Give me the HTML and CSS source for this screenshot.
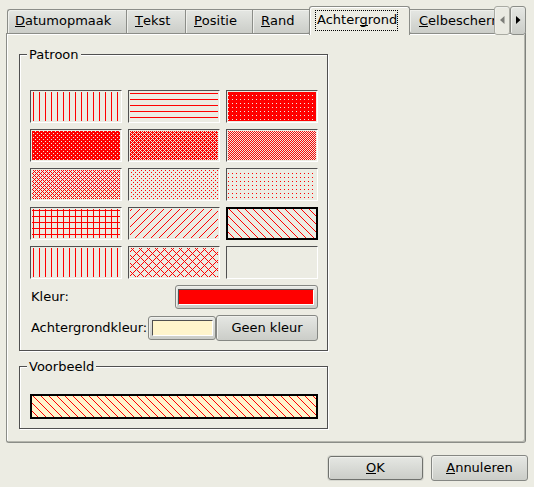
FILE: index.html
```
<!DOCTYPE html>
<html lang="nl">
<head>
<meta charset="utf-8">
<title>Achtergrond</title>
<link rel="stylesheet" href="styles.css">
</head>
<body>
<svg class="defs" width="0" height="0" aria-hidden="true">
  <defs>
    <pattern id="ver" width="6" height="6" patternUnits="userSpaceOnUse"><path d="M3 0h1v6h-1z"/></pattern>
    <pattern id="hor" width="6" height="6" patternUnits="userSpaceOnUse"><path d="M0 3h6v1h-6z"/></pattern>
    <pattern id="cross" width="6" height="6" patternUnits="userSpaceOnUse"><path d="M0 3h6v1h-6zM3 0h1v6h-1z"/></pattern>
    <pattern id="d1" width="4" height="4" patternUnits="userSpaceOnUse"><path fill-rule="evenodd" d="M0 0h4v4h-4zM2 1h1v1h-1z"/></pattern>
    <pattern id="d2" width="4" height="4" patternUnits="userSpaceOnUse"><path fill-rule="evenodd" d="M0 0h4v4h-4zM3 0h1v1h-1zM1 2h1v1h-1z"/></pattern>
    <pattern id="d3" width="4" height="4" patternUnits="userSpaceOnUse"><path fill-rule="evenodd" d="M0 0h4v4h-4zM1 0h1v1h-1zM3 0h1v1h-1zM0 1h1v1h-1zM1 2h1v1h-1zM3 2h1v1h-1zM2 3h1v1h-1z"/></pattern>
    <pattern id="d4" width="2" height="2" patternUnits="userSpaceOnUse"><path d="M0 0h1v1h-1zM1 1h1v1h-1z"/></pattern>
    <pattern id="d5" width="4" height="4" patternUnits="userSpaceOnUse"><path d="M1 0h1v1h-1zM3 0h1v1h-1zM2 1h1v1h-1zM1 2h1v1h-1zM3 2h1v1h-1zM0 3h1v1h-1z"/></pattern>
    <pattern id="d6" width="4" height="4" patternUnits="userSpaceOnUse"><path d="M3 0h1v1h-1zM1 2h1v1h-1z"/></pattern>
    <pattern id="d7" width="4" height="4" patternUnits="userSpaceOnUse"><path d="M2 1h1v1h-1z"/></pattern>
    <pattern id="bdiag" width="8" height="8" patternUnits="userSpaceOnUse"><path d="M5 0h1v1h-1zM4 1h1v1h-1zM3 2h1v1h-1zM2 3h1v1h-1zM1 4h1v1h-1zM0 5h1v1h-1zM7 6h1v1h-1zM6 7h1v1h-1z"/></pattern>
    <pattern id="fdiag" width="8" height="8" patternUnits="userSpaceOnUse"><path d="M1 0h1v1h-1zM2 1h1v1h-1zM3 2h1v1h-1zM4 3h1v1h-1zM5 4h1v1h-1zM6 5h1v1h-1zM7 6h1v1h-1zM0 7h1v1h-1z"/></pattern>
    <pattern id="dcross" width="8" height="8" patternUnits="userSpaceOnUse"><path d="M1 0h1v1h-1zM7 0h1v1h-1zM2 1h1v1h-1zM6 1h1v1h-1zM3 2h1v1h-1zM5 2h1v1h-1zM4 3h1v1h-1zM3 4h1v1h-1zM5 4h1v1h-1zM2 5h1v1h-1zM6 5h1v1h-1zM1 6h1v1h-1zM7 6h1v1h-1zM0 7h1v1h-1z"/></pattern>
  </defs>
</svg>
<div class="dialog">
  <div class="tabbar">
    <div class="tab t1"><u>D</u>atumopmaak</div>
    <div class="tab t2"><u>T</u>ekst</div>
    <div class="tab t3"><u>P</u>ositie</div>
    <div class="tab t4"><u>R</u>and</div>
    <div class="tab active"><span class="focus">Achter<u>g</u>rond</span></div>
    <div class="tab t6"><u>C</u>elbescherming</div>
    <div class="scroller off"><svg width="5" height="8" viewBox="0 0 5 8"><path d="M4.5 0v8L0 4z"/></svg></div>
    <div class="scroller"><svg width="5" height="8" viewBox="0 0 5 8"><path d="M0 0v8L4.5 4z"/></svg></div>
  </div>
  <div class="pane">
    <section class="group patterns">
      <div class="title">Patroon</div>
      <div class="grid">
        <svg class="swatch" viewBox="2 2 88 29"><rect width="92" height="33" fill="url(#ver)"/></svg>
        <svg class="swatch" viewBox="2 2 88 29"><rect width="92" height="33" fill="url(#hor)"/></svg>
        <svg class="swatch" viewBox="2 2 88 29"><rect width="92" height="33" fill="url(#d1)"/></svg>
        <svg class="swatch" viewBox="2 2 88 29"><rect width="92" height="33" fill="url(#d2)"/></svg>
        <svg class="swatch" viewBox="2 2 88 29"><rect width="92" height="33" fill="url(#d3)"/></svg>
        <svg class="swatch" viewBox="2 2 88 29"><rect width="92" height="33" fill="url(#d4)"/></svg>
        <svg class="swatch" viewBox="2 2 88 29"><rect width="92" height="33" fill="url(#d5)"/></svg>
        <svg class="swatch" viewBox="2 2 88 29"><rect width="92" height="33" fill="url(#d6)"/></svg>
        <svg class="swatch" viewBox="2 2 88 29"><rect width="92" height="33" fill="url(#d7)"/></svg>
        <svg class="swatch" viewBox="2 2 88 29"><rect width="92" height="33" fill="url(#cross)"/></svg>
        <svg class="swatch" viewBox="2 2 88 29"><rect width="92" height="33" fill="url(#bdiag)"/></svg>
        <svg class="swatch selected" viewBox="2 2 88 29"><rect width="92" height="33" fill="url(#fdiag)"/></svg>
        <svg class="swatch" viewBox="2 2 88 29"><rect width="92" height="33" fill="url(#ver)"/></svg>
        <svg class="swatch" viewBox="2 2 88 29"><rect width="92" height="33" fill="url(#dcross)"/></svg>
        <svg class="swatch" viewBox="2 2 88 29"></svg>
      </div>
      <div class="row color-row">
        <span class="label">Kleur:</span>
        <div class="button color"><div class="chip red"></div></div>
      </div>
      <div class="row back-row">
        <span class="label">Achtergrondkleur:</span>
        <div class="button color back"><div class="chip cream"></div></div>
        <div class="button none">Geen kleur</div>
      </div>
    </section>
    <section class="group sample">
      <div class="title">Voorbeeld</div>
      <svg class="preview" viewBox="2 2 284 21"><rect width="288" height="25" fill="url(#fdiag)"/></svg>
    </section>
  </div>
  <div class="actions">
    <div class="button ok"><span><u>O</u>K</span></div>
    <div class="button cancel"><span><u>A</u>nnuleren</span></div>
  </div>
</div>
</body>
</html>
```
FILE: styles.css
```
* { box-sizing: border-box; }
body {
  margin: 0;
  background: #ecece3;
  color: #000;
  font: 13px/15px "DejaVu Sans", sans-serif;
  overflow: hidden;
}
.defs { position: absolute; }
.defs path { fill: #f00; shape-rendering: crispEdges; }
u { display: inline-block; height: 14px; text-decoration: none; box-shadow: 0 -1px 0 #000 inset; }
.dialog { width: 534px; height: 487px; padding: 6px 8px 0 6px; }

.tabbar { display: flex; align-items: flex-start; height: 28px; padding-left: 1px; position: relative; z-index: 1; }
.tab {
  height: 25px;
  margin-top: 3px;
  padding: 3px 0 0 7px;
  border: 1px solid #8b8d88;
  border-right: 0;
  background: linear-gradient(#e5e7e3, #cbcdc8);
  box-shadow: inset 1px 1px 0 #eff0ec;
  white-space: nowrap;
  overflow: hidden;
}
.t1 { width: 119px; border-top-left-radius: 3px; }
.t2 { width: 59px; padding-left: 8px; }
.t3 { width: 67px; padding-left: 8px; }
.t4 { width: 57px; padding-left: 8px; border-bottom-right-radius: 3px; }
.tab.active {
  width: 101px;
  height: 29px;
  margin: 0;
  padding: 3px 0 0 5px;
  border: 1px solid #8b8d88;
  border-bottom: 0;
  border-radius: 3px 3px 0 0;
  background: #ecece3;
  box-shadow: inset 1px 1px 0 #fff;
}
.focus { display: block; width: 83px; height: 21px; padding: 1px 0 0 1px; border: 1px dotted #000; }
.t6 { width: 84px; padding-left: 9px; border-left: 0; border-bottom-left-radius: 3px; }
.scroller {
  width: 16px;
  height: 29px;
  flex: none;
  border: 1px solid #8b8d88;
  border-radius: 3px;
  background: linear-gradient(#e5e7e3, #cbcdc8);
  box-shadow: inset 1px 1px 0 #eff0ec;
  display: flex;
  align-items: center;
  justify-content: center;
}
.scroller svg { margin-top: -2px; }
.scroller.off { background: #eaeae2; border-color: #aaaba3; }
.scroller.off path { fill: #7d7e79; }

.pane {
  width: 520px;
  height: 410px;
  margin-top: -1px;
  padding: 20px 12px 0;
  border: 1px solid #8b8d88;
  border-right-color: #7f817c;
  border-radius: 0 0 3px 3px;
  box-shadow: inset 1px 1px 0 #fff, inset -1px -1px 0 #b5b6ae;
}
.group {
  width: 309px;
  padding: 0 9px 0 10px;
  border: 1px solid #505050;
  box-shadow: 1px 1px 0 #fff, inset 1px 1px 0 #fff;
}
.title { width: fit-content; height: 15px; margin: -8px 0 0 -3px; padding: 0 2px; background: #ecece3; }
.patterns { height: 297px; }
.sample { height: 63px; margin-top: 15px; }
.grid { display: grid; grid-template-columns: repeat(3, 92px); gap: 6px; margin-top: 28px; }
.swatch {
  display: block;
  width: 92px;
  height: 33px;
  padding: 1px;
  border: 1px solid;
  border-color: #505050 #fff #fff #505050;
  background: #ecece3;
}
.swatch.selected { padding: 0; border: 2px solid #000; }
.row { display: flex; }
.label { padding: 4px 0 0 1px; }
.color-row { justify-content: space-between; margin-top: 6px; }
.back-row { margin-top: 6px; }
.back-row .label { width: 118px; padding-top: 5px; white-space: nowrap; letter-spacing: -0.04px; }
.button {
  display: flex;
  align-items: center;
  justify-content: center;
  border: 1px solid #858783;
  border-radius: 3px;
  background: linear-gradient(#e5e7e3, #cbcdc8);
  box-shadow: inset 1px 1px 0 #eff0ec;
}
.color { width: 143px; height: 24px; padding: 0 1px 0 0; }
.chip { width: 136px; height: 16px; border: 1px solid; border-color: #505050 #fff #fff #505050; }
.back { width: 68px; margin-top: 1px; padding: 0 0 0 1px; }
.back .chip { width: 61px; }
.red { background: #f00; }
.cream { background: #fff5cc; }
.none { width: 102px; height: 26px; padding-bottom: 1px; }
.preview { display: block; width: 288px; height: 25px; margin-top: 20px; border: 2px solid #000; background: #fff5cc; }

.actions { display: flex; justify-content: flex-end; align-items: center; gap: 8px; margin: 12px -2px 0 0; }
.actions .button { width: 97px; height: 26px; padding-bottom: 1px; }
.actions .ok { width: 95px; height: 24px; border-color: #70726e; box-shadow: 0 0 0 1px #d7d8d0, inset 1px 1px 0 #eff0ec; }
```
